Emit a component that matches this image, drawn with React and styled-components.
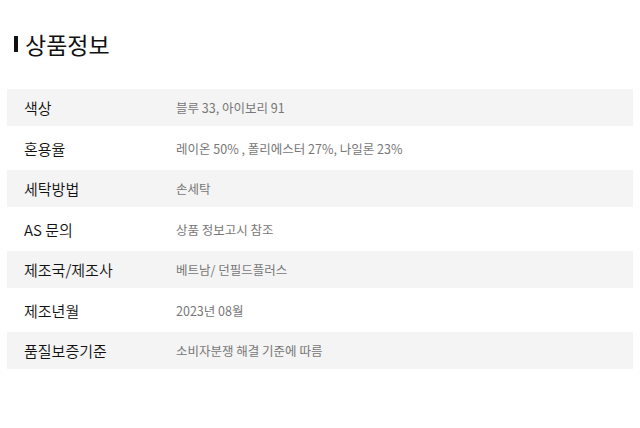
import styled, { createGlobalStyle } from "styled-components";

const Global = createGlobalStyle`
  body {
    margin: 0;
    background: #fff;
    font-family: "Noto Sans CJK KR", "Noto Sans", sans-serif;
  }
`;

const Page = styled.div`
  padding: 27px 7px 0 7px;
`;

const Title = styled.h2`
  display: flex;
  align-items: center;
  gap: 7px;
  margin: 0 0 28px 7px;
  font-size: 23px;
  font-weight: 400;
  color: #111;
  line-height: 34px;
  &::before {
    content: "";
    width: 4px;
    height: 16px;
    background: #111;
  }
`;

const Table = styled.div`
  width: 626px;
`;

const Row = styled.div`
  display: flex;
  align-items: center;
  height: ${p => (p.shaded ? 37 : 44)}px;
  background: ${p => (p.shaded ? "#f4f4f4" : "#fff")};
`;

const Label = styled.div`
  width: 152px;
  padding-left: 17px;
  font-size: 15px;
  font-weight: 350;
  color: #111;
`;

const Value = styled.div`
  font-size: 12.5px;
  font-weight: 400;
  color: #777;
`;

const info = [
  ["색상", "블루 33, 아이보리 91"],
  ["혼용율", "레이온 50% , 폴리에스터 27%, 나일론 23%"],
  ["세탁방법", "손세탁"],
  ["AS 문의", "상품 정보고시 참조"],
  ["제조국/제조사", "베트남/ 던필드플러스"],
  ["제조년월", "2023년 08월"],
  ["품질보증기준", "소비자분쟁 해결 기준에 따름"],
];

export default function App() {
  return (
    <>
      <Global />
      <Page>
        <Title>상품정보</Title>
        <Table>
          {info.map(([k, v], i) => (
            <Row key={k} shaded={i % 2 === 0}>
              <Label>{k}</Label>
              <Value>{v}</Value>
            </Row>
          ))}
        </Table>
      </Page>
    </>
  );
}
